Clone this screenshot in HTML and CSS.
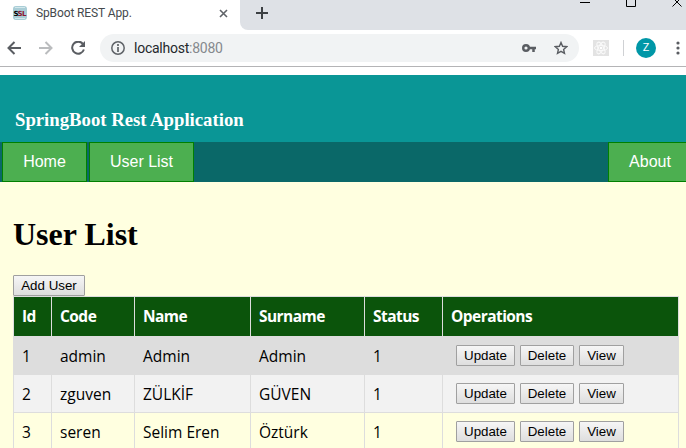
FILE: index.html
```html
<!DOCTYPE html>
<html lang="en">
<head>
<meta charset="utf-8">
<title>SpBoot REST App.</title>
<link rel="stylesheet" href="styles.css">
</head>
<body>
<div class="tabstrip">
  <div class="tab">
    <svg class="favicon" width="14" height="14" viewBox="0 0 14 14"><rect y="0" width="14" height="14" rx="3" fill="#a9cdd6"/><path d="M2 1.5h10M2 12.5h10" stroke="#d3e8ec"/><text x="0.4" y="9.8" class="ssl">S<tspan fill="#8d1730">SL</tspan></text></svg>
    <span class="tab-title">SpBoot REST App.</span>
    <svg class="tab-close" width="9" height="9" viewBox="0 0 9 9"><path d="M1 1l7 7M8 1L1 8" stroke="#5f6368" stroke-width="1.6"/></svg>
  </div>
  <div class="strip">
    <svg class="plus" width="12" height="12" viewBox="0 0 12 12"><path d="M6 0v12M0 6h12" stroke="#3c4043" stroke-width="2"/></svg>
    <svg class="controls" width="106" height="8" viewBox="0 0 106 8"><path d="M0 2.5h10M46.500-4v10.500h9v-10.500M92.500 6.500l9-9M92.500-2.500l9 9" fill="none" stroke="#000"/></svg>
  </div>
</div>
<div class="toolbar">
  <svg class="arrow" width="14" height="14" viewBox="0 0 14 14"><path d="M14 7H1.500M7.500 1L1.500 7l6 6" fill="none" stroke="#5a5d62" stroke-width="2"/></svg>
  <svg class="arrow forward" width="14" height="14" viewBox="0 0 14 14"><path d="M0 7h12.500M6.500 1l6 6-6 6" fill="none" stroke="#babcbe" stroke-width="2"/></svg>
  <svg class="reload" width="14" height="14" viewBox="0 0 14 14"><path d="M11.800 2.800A6 6 0 1 0 12.900 8.500" fill="none" stroke="#5a5d62" stroke-width="2"/><path d="M14 0v6H8z" fill="#5a5d62"/></svg>
  <div class="address">
    <svg width="14" height="14" viewBox="0 0 14 14"><circle cx="7" cy="7" r="6.200" fill="none" stroke="#5f6368" stroke-width="1.500"/><path d="M7 3v2M7 6v5" stroke="#5f6368" stroke-width="1.700"/></svg>
    <span class="url">localhost<span class="port">:8080</span></span>
    <svg class="key" width="14" height="8" viewBox="0 0 14 8"><circle cx="4" cy="4" r="2.800" fill="none" stroke="#5a5d62" stroke-width="2.400"/><path d="M7 4h7M11.500 4v4" stroke="#5a5d62" stroke-width="2.500"/></svg>
    <svg class="star" width="14" height="14" viewBox="0 0 14 14"><path d="M7 1.500l1.600 3.800 4.100.4-3.100 2.700.9 4L7 10.300l-3.500 2.100.9-4-3.100-2.700 4.100-.4z" fill="none" stroke="#5a5d62" stroke-width="1.400"/></svg>
  </div>
  <svg class="ext" width="16" height="16" viewBox="0 0 16 16"><rect width="16" height="16" fill="#e3e3e3"/><g fill="none" stroke="#fafafa"><ellipse cx="8" cy="8" rx="6.500" ry="2.600"/><ellipse cx="8" cy="8" rx="6.500" ry="2.600" transform="rotate(60 8 8)"/><ellipse cx="8" cy="8" rx="6.500" ry="2.600" transform="rotate(120 8 8)"/></g><circle cx="8" cy="8" r="1.300" fill="#fff"/></svg>
  <span class="divider"></span>
  <span class="avatar">Z</span>
  <svg class="dots" width="4" height="14" viewBox="0 0 4 14"><g fill="#5a5d62"><circle cx="2" cy="2" r="1.600"/><circle cx="2" cy="7" r="1.600"/><circle cx="2" cy="12" r="1.600"/></g></svg>
</div>
<header class="banner">SpringBoot Rest Application</header>
<nav class="nav">
  <a class="home">Home</a>
  <a class="users">User List</a>
  <a class="about">About</a>
</nav>
<main>
  <h1>User List</h1>
  <button class="add">Add User</button>
  <table>
    <colgroup><col class="c-id"><col class="c-code"><col class="c-name"><col class="c-surname"><col class="c-status"><col class="c-ops"></colgroup>
    <thead><tr><th>Id</th><th>Code</th><th>Name</th><th>Surname</th><th>Status</th><th>Operations</th></tr></thead>
    <tbody>
      <tr class="hover"><td>1</td><td>admin</td><td>Admin</td><td>Admin</td><td>1</td><td><div class="ops"><button class="update">Update</button><button class="delete">Delete</button><button class="view">View</button></div></td></tr>
      <tr class="even"><td>2</td><td>zguven</td><td>ZÜLKİF</td><td>GÜVEN</td><td>1</td><td><div class="ops"><button class="update">Update</button><button class="delete">Delete</button><button class="view">View</button></div></td></tr>
      <tr><td>3</td><td>seren</td><td>Selim Eren</td><td>Öztürk</td><td>1</td><td><div class="ops"><button class="update">Update</button><button class="delete">Delete</button><button class="view">View</button></div></td></tr>
    </tbody>
  </table>
</main>
</body>
</html>
```
FILE: styles.css
```css
* { box-sizing: border-box; }
html, body { height: 448px; overflow: hidden; }
body { margin: 0; background: #ffffe0; color: #000; }
svg { display: block; flex: none; }

.tabstrip { display: flex; height: 30px; background: #fff; }
.tab { display: flex; align-items: center; width: 240px; height: 26px; padding-left: 13px; background: #fff; font: 12px Roboto, sans-serif; color: #45494d; }
.tab-title { margin-left: 9px; width: 183px; letter-spacing: -0.12px; }
.ssl { font: bold 7px "DejaVu Sans", sans-serif; letter-spacing: -0.6px; }
.strip { display: flex; flex: 1; justify-content: space-between; background: #dee1e6; border-bottom-left-radius: 8px; }
.plus { margin: 7px 0 0 16px; }

.toolbar { display: flex; align-items: center; height: 45px; padding: 0 0 9px 7px; background: linear-gradient(#b4b4b6, #b4b4b6) 0 36px / 100% 1px no-repeat #fff; }
.forward { margin-left: 18px; }
.reload { margin-left: 18px; }
.address { display: flex; align-items: center; width: 479px; height: 28px; margin: 0 14px 0 15px; padding: 0 11px; border-radius: 14px; background: #f1f3f4; }
.url { flex: 1; margin-left: 9px; font: 14px Roboto, sans-serif; letter-spacing: -0.25px; color: #25282c; }
.port { color: #85898d; }
.star { margin-left: 18px; }
.divider { width: 1px; height: 16px; margin: 0 12px 0 14px; background: #cfd1d4; }
.avatar { width: 20px; height: 20px; border-radius: 50%; background: #0097a7; color: #fff; font: 11px/20px Roboto, sans-serif; text-align: center; flex: none; }
.dots { margin-left: 20px; }

.banner { height: 67px; padding: 34px 0 0 15px; background: #0a9696; color: #fff; font: bold 18.72px/22px "Liberation Serif", serif; }
.nav { display: flex; gap: 2px; height: 40px; padding-left: 2px; background: #0a6868; font: 16px/38px "Liberation Sans", sans-serif; color: #fff; }
.nav a { height: 40px; border: 1px solid green; background: #4caf50; text-align: center; }
.home { width: 85px; }
.users { width: 105px; }
.nav .about { width: 84px; margin: 0 -6px 0 auto; flex: none; }

main { padding: 32px 7px 0 13px; }
h1 { margin: 0; height: 61px; font: bold 32px/40px "Liberation Serif", serif; }
button { display: block; height: 21px; padding: 0; border: 1px solid #a0a0a0; border-radius: 1px; background: linear-gradient(#f6f6f6, #dedede); color: #000; font: 13.33px/19px "Liberation Sans", sans-serif; text-align: center; white-space: nowrap; }
.add { width: 72px; }
table { width: 666px; table-layout: fixed; border-collapse: collapse; font: 15.5px/20px "Open Sans", sans-serif; }
.c-id { width: 38px; }
.c-code { width: 83px; }
.c-name { width: 116px; }
.c-surname { width: 114px; }
.c-status { width: 78px; }
.c-ops { width: 236px; }
th, td { height: 38px; padding: 0 8px; border: 1px solid #ddd; text-align: left; vertical-align: middle; white-space: nowrap; }
th { height: 40px; padding-bottom: 2px; background: #0b540b; color: #fff; font-size: 15.5px; letter-spacing: -0.55px; }
.hover { background: #ddd; }
.even { background: #f2f2f2; }
.ops { display: flex; gap: 5px; padding-left: 5px; }
.update { width: 59px; }
.delete { width: 54px; }
.view { width: 45px; }
```
